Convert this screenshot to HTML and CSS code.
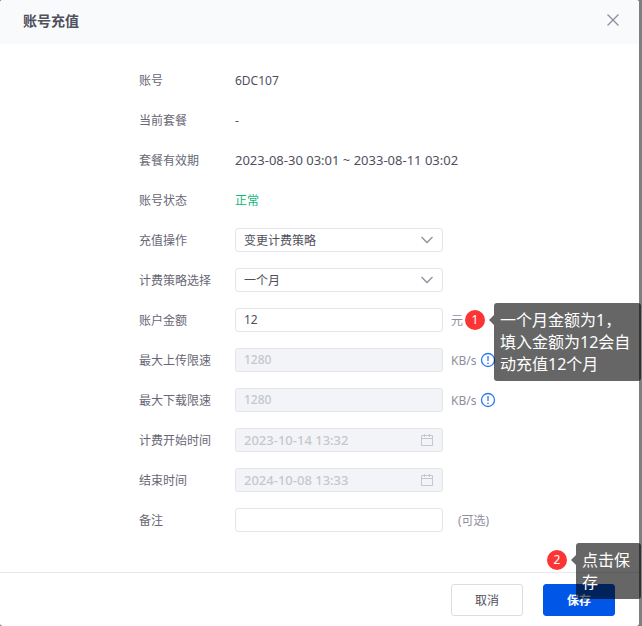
FILE: index.html
```html
<!DOCTYPE html>
<html lang="zh-CN">
  <head>
    <meta charset="UTF-8" />
    <meta name="viewport" content="width=device-width, initial-scale=1.0" />
    <title>账号充值</title>
    <link rel="stylesheet" href="styles.css">
  </head>
  <body>
    <div class="modal">
      <header class="modal-header">
        <h1>账号充值</h1>
        <button class="close" type="button" aria-label="关闭">
          <svg width="14" height="14" viewBox="0 0 14 14"><path d="M1.5 1.5l11 11M12.5 1.5l-11 11" /></svg>
        </button>
      </header>

      <form class="form" id="recharge">
        <div class="row">
          <span class="label">账号</span>
          <span class="value">6DC107</span>
        </div>
        <div class="row">
          <span class="label">当前套餐</span>
          <span class="value">-</span>
        </div>
        <div class="row">
          <span class="label">套餐有效期</span>
          <span class="date">2023-08-30 03:01 ~ 2033-08-11 03:02</span>
        </div>
        <div class="row">
          <span class="label">账号状态</span>
          <span class="value ok">正常</span>
        </div>
        <div class="row">
          <label class="label" for="action">充值操作</label>
          <div class="control">
            <select id="action">
              <option>变更计费策略</option>
            </select>
            <svg class="icon" width="14" height="14" viewBox="0 0 14 14"><path d="M1.5 4L7 9.5 12.5 4" /></svg>
          </div>
        </div>
        <div class="row">
          <label class="label" for="plan">计费策略选择</label>
          <div class="control">
            <select id="plan">
              <option>一个月</option>
            </select>
            <svg class="icon" width="14" height="14" viewBox="0 0 14 14"><path d="M1.5 4L7 9.5 12.5 4" /></svg>
          </div>
        </div>
        <div class="row">
          <label class="label" for="amount">账户金额</label>
          <div class="control"><input type="text" id="amount" value="12"></div>
          <span class="unit">元</span>
          <div class="step">1
            <p class="tip">一个月金额为1，<br>填入金额为12会自<br>动充值12个月</p>
          </div>
        </div>
        <div class="row">
          <label class="label" for="upload">最大上传限速</label>
          <div class="control"><input type="text" id="upload" value="1280" disabled></div>
          <span class="unit">KB/s</span>
          <svg class="info" width="16" height="16" viewBox="0 0 16 16"><circle cx="8" cy="8" r="6.5" /><path d="M8 4v5M8 10.5V12" /></svg>
        </div>
        <div class="row">
          <label class="label" for="download">最大下载限速</label>
          <div class="control"><input type="text" id="download" value="1280" disabled></div>
          <span class="unit">KB/s</span>
          <svg class="info" width="16" height="16" viewBox="0 0 16 16"><circle cx="8" cy="8" r="6.5" /><path d="M8 4v5M8 10.5V12" /></svg>
        </div>
        <div class="row">
          <label class="label" for="start">计费开始时间</label>
          <div class="control">
            <input class="date" type="text" id="start" value="2023-10-14 13:32" disabled>
            <svg class="icon calendar" width="14" height="14" viewBox="0 0 14 14"><path d="M1.5 2.5h11v10h-11zM1.5 5.500h11M4.500 1v3M9.500 1v3" /></svg>
          </div>
        </div>
        <div class="row">
          <label class="label" for="end">结束时间</label>
          <div class="control">
            <input class="date" type="text" id="end" value="2024-10-08 13:33" disabled>
            <svg class="icon calendar" width="14" height="14" viewBox="0 0 14 14"><path d="M1.5 2.5h11v10h-11zM1.5 5.500h11M4.500 1v3M9.500 1v3" /></svg>
          </div>
        </div>
        <div class="row">
          <label class="label" for="remark">备注</label>
          <div class="control"><input type="text" id="remark"></div>
          <span class="unit optional">(可选)</span>
        </div>
      </form>

      <footer class="modal-footer">
        <button class="btn" type="button">取消</button>
        <div class="save">
          <button class="btn primary" type="submit" form="recharge">保存</button>
          <div class="step">2
            <p class="tip">点击保<br>存</p>
          </div>
        </div>
      </footer>
    </div>
  </body>
</html>
```

FILE: styles.css
```css
* {
  margin: 0;
  padding: 0;
  box-sizing: border-box;
}
body {
  min-height: 100vh;
  padding-right: 3px;
  background-color: #7f7f7f;
  display: flex;
  font-family: "Noto Sans", "Noto Sans CJK SC", sans-serif;
  font-size: 12px;
  color: #504f5c;
}
button,
input,
select {
  font: inherit;
  color: inherit;
}
svg {
  fill: none;
  stroke: #8f8e9d;
  stroke-width: 1.3;
}
.modal {
  flex: 1;
  background-color: #fff;
  border-radius: 3px;
  display: flex;
  flex-direction: column;
}
.modal-header {
  height: 44px;
  padding: 0 19px 4px 23px;
  background-color: #f8fafc;
  border-radius: 3px 3px 0 0;
  display: flex;
  align-items: center;
  justify-content: space-between;
}
.modal-header h1 {
  font-size: 14px;
  font-weight: 600;
}
.close {
  width: 14px;
  height: 14px;
  border: none;
  background: none;
  cursor: pointer;
}
.close svg {
  display: block;
}

/* form */
.form {
  width: 361px;
  margin: 0 auto;
  padding: 24px 0 40px;
  display: flex;
  flex-direction: column;
  gap: 16px;
}
.row {
  height: 24px;
  display: flex;
  align-items: center;
  line-height: 24px;
  white-space: nowrap;
}
.label,
.value,
.unit {
  padding-top: 2px;
}
.label {
  width: 96px;
  color: #686775;
}
.date {
  font-size: 13px;
}
.ok {
  color: #12b77b;
}
.control {
  position: relative;
  width: 208px;
}
.control input,
.control select {
  display: block;
  width: 100%;
  height: 24px;
  padding: 0 8px;
  border: 1px solid #e4e4e9;
  border-radius: 3px;
  background-color: #fff;
  appearance: none;
}
.control input:disabled {
  background-color: #f3f4f7;
  color: #c6c7ce;
  font-weight: 500;
}
.control .date {
  font-size: 13px;
}
.icon {
  position: absolute;
  right: 9px;
  top: 5px;
  pointer-events: none;
}
.calendar {
  stroke: #c6c7ce;
  stroke-width: 1;
}
.unit {
  margin-left: 8px;
  color: #8f8e9d;
}
.optional {
  margin-left: 15px;
}
.info {
  margin-left: 4px;
  stroke: #2b79ea;
}

/* numbered steps with a note */
.step {
  position: relative;
  width: 20px;
  height: 20px;
  margin-left: 2px;
  border-radius: 50%;
  background-color: #fc3434;
  color: #fff;
  line-height: 20px;
  text-align: center;
}
.tip {
  position: absolute;
  top: -7px;
  left: 29px;
  z-index: 1;
  width: 147px;
  padding: 6px;
  border-radius: 3px;
  background-color: rgba(0, 0, 0, 0.6);
  font-size: 16px;
  line-height: 22px;
  text-align: left;
  white-space: nowrap;
}
.tip::before {
  content: "";
  position: absolute;
  top: 12px;
  left: -5px;
  border: solid transparent;
  border-width: 5px 5px 5px 0;
  border-right-color: rgba(0, 0, 0, 0.6);
}

/* footer */
.modal-footer {
  padding: 11px 24px 10px;
  border-top: 1px solid #e9e9ed;
  display: flex;
  justify-content: flex-end;
  gap: 20px;
}
.btn {
  width: 72px;
  height: 32px;
  border: 1px solid #dcdce2;
  border-radius: 3px;
  background-color: #fff;
  cursor: pointer;
}
.primary {
  border-color: #0057e7;
  background-color: #0057e7;
  color: #fff;
  font-weight: 600;
}
.save {
  position: relative;
}
.save .step {
  position: absolute;
  top: -34px;
  left: 2px;
}
.save .tip {
  width: 65px;
}
```
